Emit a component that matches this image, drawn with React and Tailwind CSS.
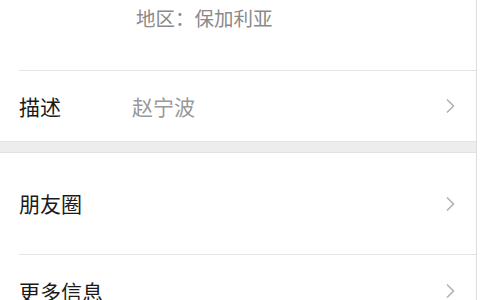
import { useState } from 'react';

const FONT = { fontFamily: '"Noto Sans CJK SC", "Noto Sans", sans-serif' };

function Chevron() {
  return (
    <svg width="10" height="16" viewBox="0 0 10 16" className="shrink-0">
      <path d="M2 1.5 L8.5 8 L2 14.5" fill="none" stroke="#b2b2b2" strokeWidth="1.6" />
    </svg>
  );
}

function Row({ label, value, height }) {
  return (
    <div className={`flex items-center pl-[19px] pr-[21px] ${height}`}>
      <div className="w-[113px] shrink-0 text-[21px] leading-[21px] text-[#1a1a1a]">{label}</div>
      <div className="flex-1 text-[21px] leading-[21px] text-[#999999]">{value}</div>
      <Chevron />
    </div>
  );
}

export default function App() {
  const [rows] = useState([
    { label: '朋友圈', h: 'h-[101px]' },
    { label: '更多信息', h: 'h-[72px]' },
  ]);

  return (
    <div className="w-[480px] h-[300px] overflow-hidden bg-white flex items-start" style={FONT}>
      <div className="w-[477px] min-h-full border-r border-[#dedede] shrink-0">
        <div className="h-[70px] pl-[136px] pt-[6px]">
          <div className="text-[19.5px] leading-[24px] text-[#8a8a8a]">地区：保加利亚</div>
        </div>
        <div className="ml-[19px] h-px bg-[#e3e3e3]" />
        <Row label="描述" value="赵宁波" height="h-[70px]" />
        <div className="h-[12px] bg-[#ededed] border-y border-[#e2e2e2]" />
        {rows.map((r, i) => (
          <div key={r.label}>
            {i > 0 && <div className="ml-[19px] h-px bg-[#e3e3e3]" />}
            <Row label={r.label} height={r.h} />
          </div>
        ))}
      </div>
    </div>
  );
}
